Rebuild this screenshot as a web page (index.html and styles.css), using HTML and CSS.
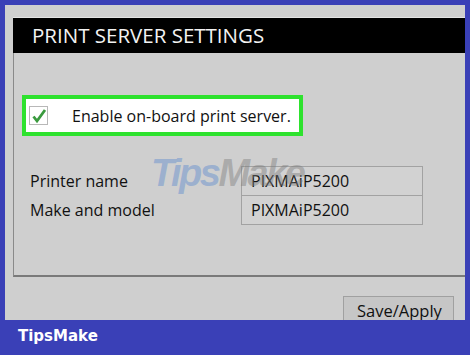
FILE: index.html
```html
<!DOCTYPE html>
<html>
<head>
<meta charset="utf-8">
<link rel="stylesheet" href="styles.css">
</head>
<body>
<div class="frame">
  <div class="screen">
    <div class="header">PRINT SERVER SETTINGS</div>
    <div class="panel">
      <div class="enable">
        <span class="checkbox">
          <svg width="17" height="17" viewBox="0 0 17 17"><path d="M3.5 9.5 L7 14 L15 3" fill="none" stroke="#3a9a3e" stroke-width="2.8" stroke-linejoin="miter"/></svg>
        </span>
        <span class="enable-text">Enable on-board print server.</span>
      </div>
      <div class="fields">
        <div class="label">Printer name</div>
        <div class="value">PIXMAiP5200</div>
        <div class="label">Make and model</div>
        <div class="value value-last">PIXMAiP5200</div>
      </div>
    </div>
    <div class="actions">
      <button class="save">Save/Apply</button>
    </div>
    <div class="watermark"><span class="wm-tips">Tips</span><span class="wm-make">Make</span></div>
  </div>
  <div class="footer">TipsMake</div>
</div>
</body>
</html>
```
FILE: styles.css
```css
html, body {
  margin: 0;
  padding: 0;
  background: #3a40b7;
}
.frame {
  width: 470px;
  height: 355px;
  padding: 5px 5px 0 5px;
  box-sizing: border-box;
  display: flex;
  flex-direction: column;
}
.screen {
  position: relative;
  height: 315px;
  background: #cfcfcf;
  padding-top: 13px;
  padding-left: 8px;
  box-sizing: border-box;
  overflow: hidden;
  font-family: "Open Sans", "Noto Sans", sans-serif;
  color: #111;
}
.header {
  height: 35px;
  line-height: 35px;
  background: #000;
  color: #f2f2f2;
  font-size: 20.5px;
  padding-left: 19px;
  border-top: 1px solid #e4e4e4;
  margin-top: -1px;
}
.panel {
  height: 224px;
  border-left: 1px solid #8a8a8a;
  border-bottom: 2px solid #7a7a7a;
  box-sizing: border-box;
  padding-top: 42px;
}
.enable {
  margin-left: 8px;
  width: 281px;
  height: 41px;
  box-sizing: border-box;
  border: 4px solid #2ee22e;
  background: #fff;
  display: flex;
  align-items: center;
  padding-left: 3px;
}
.checkbox {
  width: 19px;
  height: 19px;
  box-sizing: border-box;
  border: 1px solid #b8b8b8;
  background: #fff;
  display: flex;
  align-items: center;
  justify-content: center;
}
.enable-text {
  margin-left: 24px;
  font-size: 16px;
  color: #111;
}
.fields {
  margin-top: 30px;
  padding-left: 16px;
  display: grid;
  grid-template-columns: 211px 182px;
  font-size: 16px;
}
.label {
  line-height: 28px;
  padding-top: 1px;
}
.value {
  line-height: 28px;
  border: 1px solid #a2a2a2;
  border-bottom: none;
  padding-left: 9px;
  background: rgba(214, 214, 214, 0.55);
}
.value-last {
  border-bottom: 1px solid #a2a2a2;
}
.actions {
  display: flex;
  justify-content: flex-end;
  padding-right: 11px;
  margin-top: 19px;
}
.save {
  font-family: "Open Sans", "Noto Sans", sans-serif;
  font-size: 16.5px;
  color: #111;
  background: #c6c6c6;
  border: 1px solid #a0a0a0;
  padding: 2px 10px 3px 13px;
  box-sizing: border-box;
  width: 111px;
  text-align: left;
  border-radius: 0;
}
.watermark {
  position: absolute;
  left: 146px;
  top: 147px;
  font-family: "Liberation Sans", Arial, sans-serif;
  font-weight: bold;
  font-style: italic;
  font-size: 38px;
  letter-spacing: -2.5px;
  pointer-events: none;
}
.wm-tips {
  color: rgba(105, 145, 205, 0.5);
}
.wm-make {
  color: rgba(125, 125, 125, 0.45);
}
.footer {
  height: 35px;
  box-sizing: border-box;
  padding-left: 13px;
  padding-top: 8px;
  font-family: "DejaVu Sans", sans-serif;
  font-weight: bold;
  font-size: 15px;
  line-height: 17px;
  color: #fff;
}
```
